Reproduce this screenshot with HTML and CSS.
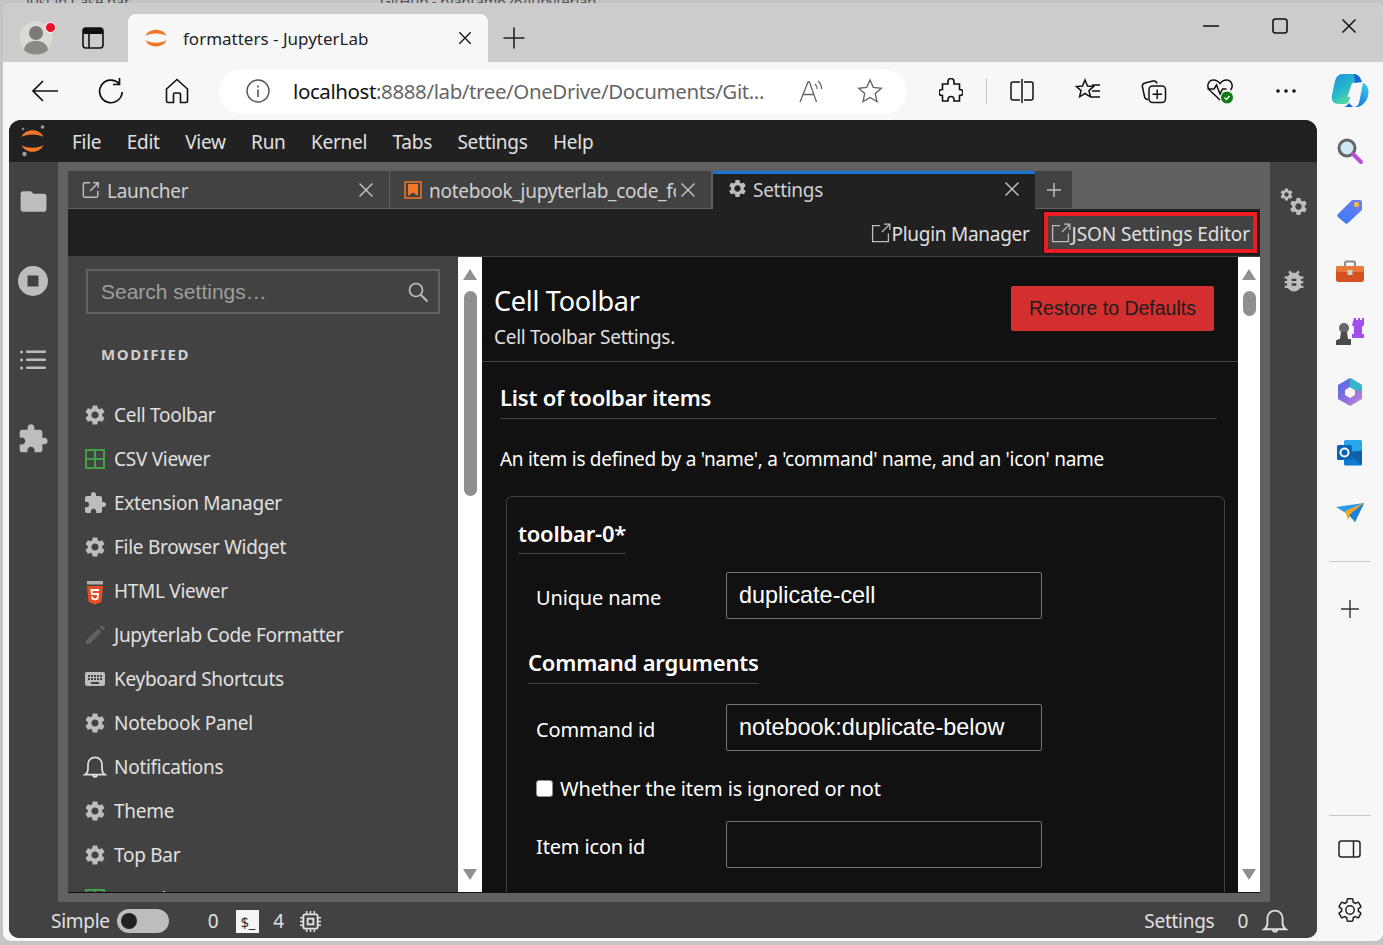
FILE: index.html
```html
<!DOCTYPE html>
<html lang="en">

<head>
    <meta charset="UTF-8">
    <title>formatters - JupyterLab</title>
    <link rel="stylesheet" href="styles.css">
</head>

<body>

    <svg class="sprite" width="0" height="0">
        <symbol id="i-gear" viewBox="0 0 24 24"><path d="M19.14 12.94c.04-.3.06-.61.06-.94 0-.32-.02-.64-.07-.94l2.03-1.58c.18-.14.23-.41.12-.61l-1.92-3.32c-.12-.22-.37-.29-.59-.22l-2.39.96c-.5-.38-1.03-.7-1.62-.94l-.36-2.54c-.04-.24-.24-.41-.48-.41h-3.84c-.24 0-.43.17-.47.41l-.36 2.54c-.59.24-1.13.57-1.62.94l-2.39-.96c-.22-.08-.47 0-.59.22L2.74 8.87c-.12.21-.08.47.12.61l2.03 1.58c-.05.3-.09.63-.09.94s.02.64.07.94l-2.03 1.58c-.18.14-.23.41-.12.61l1.92 3.32c.12.22.37.29.59.22l2.39-.96c.5.38 1.03.7 1.62.94l.36 2.54c.05.24.24.41.48.41h3.84c.24 0 .44-.17.47-.41l.36-2.54c.59-.24 1.13-.56 1.62-.94l2.39.96c.22.08.47 0 .59-.22l1.92-3.32c.12-.22.07-.47-.12-.61l-2.01-1.58zM12 15.6c-1.98 0-3.6-1.62-3.6-3.6s1.62-3.6 3.6-3.6 3.6 1.62 3.6 3.6-1.62 3.6-3.6 3.6z"/></symbol>
        <symbol id="i-puzzle" viewBox="0 0 24 24"><path d="M20.5 11H19V7c0-1.1-.9-2-2-2h-4V3.5C13 2.12 11.88 1 10.5 1S8 2.12 8 3.5V5H4c-1.1 0-1.99.9-1.99 2v3.8H3.5c1.49 0 2.7 1.21 2.7 2.7s-1.21 2.7-2.7 2.7H2V20c0 1.1.9 2 2 2h3.8v-1.5c0-1.49 1.21-2.7 2.7-2.7 1.49 0 2.7 1.21 2.7 2.7V22H17c1.1 0 2-.9 2-2v-4h1.5c1.38 0 2.5-1.12 2.5-2.5S21.88 11 20.5 11z"/></symbol>
        <symbol id="i-bell" viewBox="0 0 24 24"><path fill="none" stroke="currentColor" stroke-width="1.700" d="M2 19.600c1.600-1 3-2.600 3-5.600V9.500C5 5.400 8 2.400 12 2.400s7 3 7 7.100V14c0 3 1.400 4.600 3 5.600zM10 19.800a2 2 0 0 0 4 0"/></symbol>
        <symbol id="i-ext" viewBox="0 0 20 20"><path fill="none" stroke="#bdbdbd" stroke-width="1.300" d="M9 2.600H1.600v16h15.800v-8M11 9l7.600-7.600M13 1.200h5.800V7"/></symbol>
        <symbol id="i-x" viewBox="0 0 16 16"><path fill="none" stroke="currentColor" stroke-width="1.500" d="M1.500 1.500l13 13M14.500 1.500l-13 13"/></symbol>
    </svg>

    <div class="behind">
        <span class="behind-a">Just in Case.bar</span>
        <span class="behind-b">GitHub - ryantam626/jupyterlab</span>
    </div>

    <div class="window">

        <div class="tabstrip">
            <div class="avatar">
                <svg width="36" height="36" viewBox="0 0 36 36">
                    <circle cx="17" cy="18" r="16.500" fill="#dcdad6"/>
                    <circle cx="17" cy="13" r="7" fill="#7c7a77"/>
                    <path d="M5 30c1-7 6-9 12-9s11 2 12 9c-3 3-7 4.500-12 4.500S8 33 5 30z" fill="#8b8985"/>
                </svg>
                <span class="avatar-dot"></span>
            </div>
            <svg class="tabs-btn" width="22" height="22" viewBox="0 0 22 22">
                <rect x="1" y="1" width="20" height="20" rx="3" fill="none" stroke="#111" stroke-width="1.600"/>
                <path d="M1 4a3 3 0 0 1 3-3h14a3 3 0 0 1 3 3v3H1z" fill="#111"/>
                <path d="M7 7v14" stroke="#111" stroke-width="1.600"/>
            </svg>
            <div class="browser-tab">
                <svg width="24" height="24" viewBox="0 0 24 24">
                    <path d="M1.500 10C4 1.500 20 1.500 22.500 10 18 6.500 6 6.500 1.500 10zM1.500 14C4 22.500 20 22.500 22.500 14 18 17.500 6 17.500 1.500 14z" fill="#f37726"/>
                </svg>
                <span class="browser-tab-title">formatters - JupyterLab</span>
                <svg class="browser-tab-close" width="14" height="14"><use href="#i-x"/></svg>
            </div>
            <svg class="new-tab" width="24" height="24" viewBox="0 0 24 24"><path d="M12 1.500v21M1.500 12h21" stroke="#222" stroke-width="1.600"/></svg>
            <div class="win-controls">
                <svg width="16" height="16" viewBox="0 0 16 16"><path d="M0 8h16" stroke="#111" stroke-width="1.600"/></svg>
                <svg width="16" height="16" viewBox="0 0 16 16"><rect x="1" y="1" width="14" height="14" rx="2.500" fill="none" stroke="#111" stroke-width="1.600"/></svg>
                <svg width="16" height="16"><use href="#i-x"/></svg>
            </div>
        </div>

        <div class="toolbar">
            <div class="tool">
                <svg width="28" height="24" viewBox="0 0 28 24"><path d="M27 12H2M12 2L2 12l10 10" fill="none" stroke="#111" stroke-width="1.700"/></svg>
            </div>
            <div class="tool">
                <svg width="26" height="28" viewBox="0 0 26 28"><path d="M21 6.500A11.300 11.300 0 1 0 24.200 15M21.500 1v6.500H15" fill="none" stroke="#111" stroke-width="1.700"/></svg>
            </div>
            <div class="tool">
                <svg width="24" height="26" viewBox="0 0 24 26"><path d="M1.500 11L12 1.500 22.500 11v12a1.500 1.500 0 0 1-1.500 1.500h-5.500v-8a1.500 1.500 0 0 0-1.500-1.500h-4a1.500 1.500 0 0 0-1.500 1.500v8H3A1.500 1.500 0 0 1 1.500 23z" fill="none" stroke="#111" stroke-width="1.600"/></svg>
            </div>
            <div class="address">
                <svg width="24" height="24" viewBox="0 0 24 24"><circle cx="12" cy="12" r="11" fill="none" stroke="#555" stroke-width="1.400"/><path d="M12 10.500V18M12 6.500v2" stroke="#555" stroke-width="1.600"/></svg>
                <span class="url"><b>localhost</b>:8888/lab/tree/OneDrive/Documents/Git...</span>
                <svg class="read-aloud" width="24" height="24" viewBox="0 0 24 24"><path d="M1 23L9 3h1.500l7 20M4.500 15.500h10M16 5a6 6 0 0 1 2 5M19 2a10 10 0 0 1 3.500 8" fill="none" stroke="#666" stroke-width="1.300"/></svg>
                <svg class="star" width="26" height="26" viewBox="0 0 26 26"><path d="M13 2l3.300 7.400 8 .8-6 5.400 1.700 8L13 19.500 6 23.600l1.700-8-6-5.400 8-.8z" fill="none" stroke="#666" stroke-width="1.400"/></svg>
            </div>
            <div class="tool tool-first">
                <svg width="24" height="26" viewBox="0 0 24 26"><path d="M9 3.500a3 3 0 0 1 6 0V6h5.500v5.500H21a3 3 0 0 1 0 6h-.5v5.500H15v-1.500a3 3 0 0 0-6 0V23H3.500v-5.500H3a3 3 0 0 1 0-6h.5V6H9z" fill="none" stroke="#111" stroke-width="1.600"/></svg>
            </div>
            <span class="tool-sep"></span>
            <div class="tool">
                <svg width="24" height="24" viewBox="0 0 24 24"><path d="M10 3H3a2 2 0 0 0-2 2v14a2 2 0 0 0 2 2h7M14 3h7a2 2 0 0 1 2 2v14a2 2 0 0 1-2 2h-7M12 0v24" fill="none" stroke="#111" stroke-width="1.500"/></svg>
            </div>
            <div class="tool">
                <svg width="26" height="26" viewBox="0 0 26 26"><path d="M10 2l2.500 6 6 .6-4.500 4 1.400 6.200L10 15.500l-5.400 3.300L6 12.600l-4.500-4 6-.6zM17 7h8M17 13h8M15 19h10" fill="none" stroke="#111" stroke-width="1.500"/></svg>
            </div>
            <div class="tool">
                <svg width="26" height="26" viewBox="0 0 26 26"><path d="M7 21.500c-2 0-3-1-3.400-2.500L1.500 9C1 7 2 5.500 4 5l8-2c2-.4 3.500.4 4 2.500" fill="none" stroke="#111" stroke-width="1.500"/><rect x="8" y="8" width="16.500" height="16.500" rx="3.500" fill="#f7f7f7" stroke="#111" stroke-width="1.500"/><path d="M16.200 11.500v9.500M11.500 16.200H21" stroke="#111" stroke-width="1.500"/></svg>
            </div>
            <div class="tool">
                <svg width="28" height="26" viewBox="0 0 28 26"><path d="M14 22L3.500 12C0 8 2.500 2 7.500 2c3 0 5 1.500 6.500 3.500C15.500 3.500 17.500 2 20.500 2c5 0 7.500 6 4 10" fill="none" stroke="#111" stroke-width="1.500"/><path d="M1.500 11H8l2.500-4 3.500 9 2.500-5h4" fill="none" stroke="#111" stroke-width="1.500"/><circle cx="21" cy="19.500" r="6" fill="#107c10"/><path d="M18.500 19.500l2 2 3-3.500" fill="none" stroke="#fff" stroke-width="1.400"/></svg>
            </div>
            <div class="tool">
                <svg width="22" height="6" viewBox="0 0 22 6"><circle cx="3" cy="3" r="1.800" fill="#111"/><circle cx="11" cy="3" r="1.800" fill="#111"/><circle cx="19" cy="3" r="1.800" fill="#111"/></svg>
            </div>
            <div class="tool tool-last">
                <svg width="38" height="36" viewBox="0 0 38 36">
                    <defs>
                        <linearGradient id="cpA" x1="0" y1="0" x2="0.600" y2="1"><stop offset="0" stop-color="#1b8fe0"/><stop offset=".6" stop-color="#28b9c8"/><stop offset="1" stop-color="#5fdc9a"/></linearGradient>
                        <linearGradient id="cpB" x1="0.800" y1="0" x2="0.200" y2="1"><stop offset="0" stop-color="#38c9f0"/><stop offset="1" stop-color="#1466d8"/></linearGradient>
                    </defs>
                    <path d="M11 1h11c3 0 4 2 3 5l-7 22c-.8 2-2 3-4 3H8c-6 0-8-4-7-9l3-14C5 4 8 1 11 1z" fill="url(#cpA)"/>
                    <path d="M22 34c3 0 5-1.500 6-4l4-20c2 .5 5.500 3 5.500 9 0 8-6 15-12 15H12c2 0 4-1 5-3l1-1z" fill="url(#cpB)"/>
                    <path d="M23 1c3 0 6 2 8 8l-7 1z" fill="#1666d6"/>
                    <path d="M21 10h3.500l-4.500 14h-3.500z" fill="#f7f7f7"/>
                </svg>
            </div>
        </div>

        <div class="content">
            <div class="lab">

                <div class="menubar">
                    <svg class="jp-logo" width="28" height="34" viewBox="0 0 28 34">
                        <path d="M2.500 13C6 4 21 4 24.500 13 20 9.500 7 9.500 2.500 13zM2.500 21C6 30 21 30 24.500 21 20 24.500 7 24.500 2.500 21z" fill="#f37726"/>
                        <circle cx="23.500" cy="3" r="1.800" fill="#9e9e9e"/><circle cx="4" cy="5" r="1.300" fill="#8a8a8a"/><circle cx="5.500" cy="30" r="2.200" fill="#9e9e9e"/>
                    </svg>
                    <span>File</span><span>Edit</span><span>View</span><span>Run</span><span>Kernel</span><span>Tabs</span><span>Settings</span><span>Help</span>
                </div>

                <div class="lab-body">
                    <div class="side-left">
                        <div class="side-btn">
                            <svg width="31" height="31" viewBox="0 0 24 24"><path d="M10 4H4c-1.100 0-1.990.9-1.990 2L2 18c0 1.100.9 2 2 2h16c1.100 0 2-.9 2-2V8c0-1.100-.9-2-2-2h-8l-2-2z"/></svg>
                        </div>
                        <div class="side-btn">
                            <svg width="30" height="30" viewBox="0 0 30 30"><path fill-rule="evenodd" d="M15 0a15 15 0 1 0 0 30 15 15 0 0 0 0-30zM9.500 9.500h11v11h-11z"/></svg>
                        </div>
                        <div class="side-btn">
                            <svg width="26" height="20" viewBox="0 0 26 20"><rect x="0" y="0.500" width="3" height="3" rx="1.500"/><rect x="6" y="0.500" width="20" height="2.500" rx="1"/><rect x="0" y="8.500" width="3" height="3" rx="1.500"/><rect x="6" y="8.500" width="20" height="2.500" rx="1"/><rect x="0" y="16.500" width="3" height="3" rx="1.500"/><rect x="6" y="16.500" width="20" height="2.500" rx="1"/></svg>
                        </div>
                        <div class="side-btn">
                            <svg width="32" height="32"><use href="#i-puzzle"/></svg>
                        </div>
                    </div>

                    <div class="dock">
                        <div class="dock-tabs">
                            <div class="dock-tab">
                                <svg class="tab-ico" width="18" height="18" viewBox="0 0 20 20"><path fill="none" stroke="#bdbdbd" stroke-width="1.600" d="M9 2H3a1.500 1.500 0 0 0-1.500 1.500v13A1.500 1.500 0 0 0 3 18h13a1.500 1.500 0 0 0 1.500-1.500V11M9 11l9-9M12.500 2H18v5.500"/></svg>
                                <span class="dock-tab-label">Launcher</span>
                                <svg class="dock-close" width="16" height="16"><use href="#i-x"/></svg>
                            </div>
                            <div class="dock-tab">
                                <svg class="tab-ico" width="18" height="18" viewBox="0 0 18 18"><rect x="1" y="1" width="16" height="16" fill="none" stroke="#f37726" stroke-width="1.500"/><path d="M4 3h10v12l-5-3.500L4 15z" fill="#f37726"/></svg>
                                <span class="dock-tab-label">notebook_jupyterlab_code_formatter</span>
                                <svg class="dock-close" width="16" height="16"><use href="#i-x"/></svg>
                            </div>
                            <div class="dock-tab dock-tab-active">
                                <svg class="tab-ico gear" width="21" height="21"><use href="#i-gear"/></svg>
                                <span class="dock-tab-label">Settings</span>
                                <svg class="dock-close" width="16" height="16"><use href="#i-x"/></svg>
                            </div>
                            <div class="dock-add">
                                <svg width="14" height="14" viewBox="0 0 14 14"><path d="M7 0v14M0 7h14" stroke="#bdbdbd" stroke-width="1.500"/></svg>
                            </div>
                        </div>

                        <div class="settings-toolbar">
                            <div class="link-btn">
                                <svg width="20" height="20"><use href="#i-ext"/></svg>
                                <span>Plugin Manager</span>
                            </div>
                            <div class="json-mark">
                                <div class="link-btn json-btn">
                                    <svg width="20" height="20"><use href="#i-ext"/></svg>
                                    <span>JSON Settings Editor</span>
                                </div>
                            </div>
                        </div>

                        <div class="settings-body">
                            <div class="plugin-list">
                                <div class="search">
                                    <span>Search settings…</span>
                                    <svg width="22" height="22" viewBox="0 0 22 22"><circle cx="9" cy="9" r="6.500" fill="none" stroke="#bdbdbd" stroke-width="1.700"/><path d="M14 14l6.500 6.500" stroke="#bdbdbd" stroke-width="2"/></svg>
                                </div>
                                <h3 class="list-title">MODIFIED</h3>
                                <ul class="plugins">
                                    <li><svg class="gear" width="24" height="24"><use href="#i-gear"/></svg>Cell Toolbar</li>
                                    <li><svg width="20" height="20" viewBox="0 0 20 20"><path fill="none" stroke="#43a047" stroke-width="2" d="M1 1h18v18H1zM10 1v18M1 10h18"/></svg>CSV Viewer</li>
                                    <li><svg class="gear" width="24" height="24"><use href="#i-puzzle"/></svg>Extension Manager</li>
                                    <li><svg class="gear" width="24" height="24"><use href="#i-gear"/></svg>File Browser Widget</li>
                                    <li><svg width="20" height="24" viewBox="0 0 20 24"><path d="M2 5h16l-1.500 16L10 23.500 3.500 21z" fill="#e44d26"/><path d="M2 0h16v3.500H2z" fill="#e0e0e0" opacity=".7"/><path d="M14 9H6.500l.3 4H13l-.4 4.500-2.600 1-2.600-1-.2-2" fill="none" stroke="#fff" stroke-width="1.800"/></svg>HTML Viewer</li>
                                    <li><svg width="24" height="24" viewBox="0 0 24 24"><path d="M3 21v-3.500L15 5.500 18.500 9 6.500 21zM16.500 4l2-2L22 5.500l-2 2z" fill="#616161"/></svg>Jupyterlab Code Formatter</li>
                                    <li><svg class="gear" width="24" height="24" viewBox="0 0 24 24"><path d="M20 5H4c-1.100 0-1.990.9-1.990 2L2 17c0 1.100.9 2 2 2h16c1.100 0 2-.9 2-2V7c0-1.100-.9-2-2-2zm-9 3h2v2h-2V8zm0 3h2v2h-2v-2zM8 8h2v2H8V8zm0 3h2v2H8v-2zm-1 2H5v-2h2v2zm0-3H5V8h2v2zm9 7H8v-2h8v2zm0-4h-2v-2h2v2zm0-3h-2V8h2v2zm3 3h-2v-2h2v2zm0-3h-2V8h2v2z"/></svg>Keyboard Shortcuts</li>
                                    <li><svg class="gear" width="24" height="24"><use href="#i-gear"/></svg>Notebook Panel</li>
                                    <li><svg class="bell" width="24" height="24"><use href="#i-bell"/></svg>Notifications</li>
                                    <li><svg class="gear" width="24" height="24"><use href="#i-gear"/></svg>Theme</li>
                                    <li><svg class="gear" width="24" height="24"><use href="#i-gear"/></svg>Top Bar</li>
                                    <li><svg width="20" height="20" viewBox="0 0 20 20"><path fill="none" stroke="#43a047" stroke-width="2" d="M1 1h18v18H1zM10 1v18M1 10h18"/></svg>TSV Viewer</li>
                                </ul>
                            </div>

                            <div class="scrollbar">
                                <span class="arrow-up"></span>
                                <span class="thumb thumb-list"></span>
                                <span class="arrow-down"></span>
                            </div>

                            <div class="editor">
                                <div class="editor-head">
                                    <div>
                                        <h2>Cell Toolbar</h2>
                                        <p>Cell Toolbar Settings.</p>
                                    </div>
                                    <button class="restore">Restore to Defaults</button>
                                </div>
                                <div class="editor-form">
                                    <h3 class="legend">List of toolbar items</h3>
                                    <p class="desc">An item is defined by a 'name', a 'command' name, and an 'icon' name</p>
                                    <div class="item-card">
                                        <h3 class="card-legend"><span>toolbar-0*</span></h3>
                                        <div class="field">
                                            <label>Unique name</label>
                                            <input type="text" value="duplicate-cell">
                                        </div>
                                        <h3 class="args-legend"><span>Command arguments</span></h3>
                                        <div class="field">
                                            <label>Command id</label>
                                            <input type="text" value="notebook:duplicate-below">
                                        </div>
                                        <label class="check"><input type="checkbox">Whether the item is ignored or not</label>
                                        <div class="field">
                                            <label>Item icon id</label>
                                            <input type="text">
                                        </div>
                                    </div>
                                </div>
                            </div>

                            <div class="scrollbar scrollbar-thin">
                                <span class="arrow-up"></span>
                                <span class="thumb thumb-form"></span>
                                <span class="arrow-down"></span>
                            </div>
                        </div>
                    </div>

                    <div class="side-right">
                        <div class="side-btn">
                            <svg width="30" height="30" viewBox="0 0 30 30"><use href="#i-gear" x="0" y="0" width="15" height="15"/><use href="#i-gear" x="9" y="9" width="21" height="21"/></svg>
                        </div>
                        <div class="side-btn">
                            <svg width="28" height="28" viewBox="0 0 24 24"><path d="M20 8h-2.810c-.45-.78-1.070-1.450-1.820-1.960L17 4.410 15.590 3l-2.170 2.170C12.960 5.060 12.490 5 12 5c-.49 0-.96.06-1.410.17L8.410 3 7 4.410l1.620 1.630C7.880 6.550 7.260 7.220 6.810 8H4v2h2.090c-.05.33-.09.66-.09 1v1H4v2h2v1c0 .34.04.67.09 1H4v2h2.810c1.040 1.790 2.970 3 5.190 3s4.150-1.210 5.190-3H20v-2h-2.090c.05-.33.09-.66.09-1v-1h2v-2h-2v-1c0-.34-.04-.67-.09-1H20V8zm-6 8h-4v-2h4v2zm0-4h-4v-2h4v2z"/></svg>
                        </div>
                    </div>
                </div>

                <div class="statusbar">
                    <span class="status-simple">Simple</span>
                    <span class="toggle"><span class="toggle-dot"></span></span>
                    <span class="status-zero">0</span>
                    <span class="term-ico">$_</span>
                    <span class="status-four">4</span>
                    <svg class="cpu" width="21" height="21" viewBox="0 0 22 22"><rect x="3.500" y="3.500" width="15" height="15" rx="2" fill="none" stroke="#e0e0e0" stroke-width="2"/><rect x="8" y="8" width="6" height="6" fill="none" stroke="#e0e0e0" stroke-width="2"/><path d="M7 0v3M11 0v3M15 0v3M7 19v3M11 19v3M15 19v3M0 7h3M0 11h3M0 15h3M19 7h3M19 11h3M19 15h3" stroke="#e0e0e0" stroke-width="1.600"/></svg>
                    <span class="status-right">Settings</span>
                    <span class="status-count">0</span>
                    <svg class="status-bell" width="26" height="26"><use href="#i-bell"/></svg>
                </div>
            </div>

            <div class="edge-bar">
                <div class="edge-ico">
                    <svg width="28" height="28" viewBox="0 0 28 28"><circle cx="11" cy="11" r="8" fill="#cfe8f7" stroke="#666" stroke-width="3"/><path d="M17 17l8 8" stroke="#b84fd8" stroke-width="4" stroke-linecap="round"/></svg>
                </div>
                <div class="edge-ico">
                    <svg width="28" height="28" viewBox="0 0 28 28"><defs><linearGradient id="tagG" x1="0" y1="1" x2="1" y2="0"><stop offset="0" stop-color="#2f7bf5"/><stop offset="1" stop-color="#7a7cf0"/></linearGradient></defs><path d="M2 17L16 3h8a2 2 0 0 1 2 2v8L12 26a2 2 0 0 1-3 0l-7-6a2 2 0 0 1 0-3z" fill="url(#tagG)"/><circle cx="20.500" cy="7.500" r="2.500" fill="#f5c33b"/></svg>
                </div>
                <div class="edge-ico">
                    <svg width="28" height="24" viewBox="0 0 28 24"><path d="M9 6V3a1.500 1.500 0 0 1 1.500-1.500h7A1.500 1.500 0 0 1 19 3v3" fill="none" stroke="#8a8a8a" stroke-width="2"/><rect y="6" width="28" height="16" rx="2.500" fill="#d4521f"/><rect y="6" width="28" height="6" rx="2" fill="#e8793a"/><rect x="11.500" y="10" width="5" height="5" fill="#d0d0d0"/></svg>
                </div>
                <div class="edge-ico">
                    <svg width="30" height="30" viewBox="0 0 30 30"><path d="M19 1h2v2h2V1h2v2h2V1h2v7l-2 2v7h2v4H17v-4h2v-7l-2-2z" fill="#a64df0"/><circle cx="9" cy="11" r="5" fill="#666"/><path d="M6 15h6l1 7h3v6H1v-4c0-1 2-2 4-2z" fill="#4a4a4a"/></svg>
                </div>
                <div class="edge-ico">
                    <svg width="26" height="28" viewBox="0 0 26 28"><defs><linearGradient id="msG" x1="0" y1="0" x2="1" y2="1"><stop offset="0" stop-color="#3f6ee8"/><stop offset=".5" stop-color="#8a6ddc"/><stop offset="1" stop-color="#c788d8"/></linearGradient></defs><path fill-rule="evenodd" d="M13 0l12 7v14l-12 7L1 21V7zM13 9l-5 3v5l5 3 5-3v-5z" fill="url(#msG)"/><path d="M13 0l12 7v6l-7-1-5-3z" fill="#34b8c8"/></svg>
                </div>
                <div class="edge-ico">
                    <svg width="26" height="26" viewBox="0 0 26 26"><rect x="7" y="0" width="18" height="14" rx="1.500" fill="#28a8ea"/><path d="M7 11l18 0v13a1.500 1.500 0 0 1-1.500 1.500h-15A1.500 1.500 0 0 1 7 24z" fill="#0f78d4"/><path d="M11 14l14-4v15z" fill="#14447d" opacity=".5"/><rect x="0" y="5" width="15" height="15" rx="1.500" fill="#0a64b8"/><circle cx="7.500" cy="12.500" r="4" fill="none" stroke="#fff" stroke-width="2"/></svg>
                </div>
                <div class="edge-ico">
                    <svg width="28" height="20" viewBox="0 0 28 20"><path d="M0 4L28 0 19 19 13 12z" fill="#2f9be8"/><path d="M28 0L9 8l3 9 3-6z" fill="#f5a623"/><path d="M28 0L13 12l6 7z" fill="#1e7fd6"/></svg>
                </div>
                <div class="edge-rule edge-rule-top"></div>
                <div class="edge-plus">
                    <svg width="18" height="18" viewBox="0 0 18 18"><path d="M9 0v18M0 9h18" stroke="#333" stroke-width="1.400"/></svg>
                </div>
                <div class="edge-rule edge-rule-bottom"></div>
                <div class="edge-panel">
                    <svg width="24" height="20" viewBox="0 0 24 20"><rect x="1" y="2" width="21" height="16" rx="2.500" fill="none" stroke="#222" stroke-width="1.500"/><path d="M15.500 2v16" stroke="#222" stroke-width="1.500"/></svg>
                </div>
                <div class="edge-gear">
                    <svg width="28" height="28" viewBox="0 0 24 24"><path fill="none" stroke="#222" stroke-width="1.300" d="M19.140 12.940c.04-.3.06-.61.06-.94 0-.32-.02-.64-.07-.94l2.030-1.580c.18-.14.23-.41.12-.61l-1.920-3.320c-.12-.22-.37-.29-.59-.22l-2.390.96c-.5-.38-1.030-.7-1.620-.94l-.36-2.540c-.04-.24-.24-.41-.48-.41h-3.840c-.24 0-.43.17-.47.41l-.36 2.540c-.59.24-1.130.57-1.620.94l-2.390-.96c-.22-.08-.47 0-.59.22L2.740 8.870c-.12.21-.08.47.12.61l2.030 1.580c-.05.3-.09.63-.09.94s.02.64.07.94l-2.030 1.580c-.18.14-.23.41-.12.61l1.920 3.320c.12.22.37.29.59.22l2.390-.96c.5.38 1.030.7 1.620.94l.36 2.540c.05.24.24.41.48.41h3.840c.24 0 .44-.17.47-.41l.36-2.540c.59-.24 1.130-.56 1.620-.94l2.390.96c.22.08.47 0 .59-.22l1.920-3.320c.12-.22.07-.47-.12-.61l-2.010-1.580zM12 15.600c-1.980 0-3.600-1.620-3.600-3.600s1.620-3.600 3.600-3.600 3.600 1.620 3.600 3.600-1.620 3.600-3.600 3.600z"/></svg>
                </div>
            </div>
        </div>
    </div>

</body>

</html>
```

FILE: styles.css
```css
* {
    margin: 0;
    padding: 0;
    box-sizing: border-box;
}

body {
    width: 1383px;
    height: 945px;
    overflow: hidden;
    background-color: #c4c4c4;
    font-family: "Noto Sans", "Open Sans", sans-serif;
    font-size: 19px;
    letter-spacing: -0.28px;
    color: #e0e0e0;
    position: relative;
}

.sprite {
    position: absolute;
}

.behind {
    height: 3px;
    overflow: hidden;
    display: flex;
    color: #555;
    font-size: 15px;
    line-height: 3px;
}

.behind span {
    display: block;
}

.behind-a {
    margin-left: 26px;
    width: 354px;
}

.window {
    height: 938px;
    margin-left: 3px;
    background-color: #f7f7f7;
    border-radius: 8px;
    overflow: hidden;
    display: flex;
    flex-direction: column;
}

/* browser chrome */
.tabstrip {
    height: 59px;
    background-color: #cccccc;
    display: flex;
    align-items: flex-end;
    position: relative;
    flex-shrink: 0;
}

.avatar {
    position: absolute;
    left: 16px;
    top: 17px;
    height: 36px;
}

.avatar-dot {
    position: absolute;
    right: -1px;
    top: 2px;
    width: 11px;
    height: 11px;
    border-radius: 50%;
    background-color: #e81123;
    border: 1px solid #fff;
}

.tabs-btn {
    position: absolute;
    left: 79px;
    top: 24px;
}

.browser-tab {
    margin-left: 125px;
    width: 360px;
    height: 48px;
    background-color: #f7f7f7;
    border-radius: 8px 8px 0 0;
    display: flex;
    align-items: center;
    padding: 0 16px;
    color: #222;
    font-size: 17px;
    letter-spacing: 0;
}

.browser-tab-title {
    margin-left: 15px;
    flex: 1;
}

.browser-tab-close {
    color: #111;
}

.new-tab {
    margin-left: 14px;
    margin-bottom: 12px;
}

.win-controls {
    margin-left: auto;
    display: flex;
    gap: 53px;
    padding-right: 26px;
    margin-bottom: 28px;
    color: #111;
}

.toolbar {
    height: 58px;
    display: flex;
    align-items: center;
    padding-left: 9px;
    flex-shrink: 0;
}

.tool {
    width: 66px;
    height: 46px;
    display: flex;
    align-items: center;
    justify-content: center;
    flex-shrink: 0;
}

.tool-first {
    margin-left: 11px;
}

.tool-last {
    width: 62px;
}

.tool-sep {
    width: 1px;
    height: 26px;
    margin: 0 2px;
    flex-shrink: 0;
    background-color: #c8c8c8;
}

.address {
    width: 688px;
    height: 45px;
    margin-left: 9px;
    flex-shrink: 0;
    background-color: #ffffff;
    border-radius: 23px;
    display: flex;
    align-items: center;
    padding-left: 27px;
}

.url {
    margin-left: 23px;
    width: 484px;
    font-size: 20.5px;
    color: #666666;
    white-space: nowrap;
    overflow: hidden;
    letter-spacing: -0.4px;
}

.url b {
    font-weight: 400;
    color: #111;
}

.read-aloud {
    margin-left: 22px;
}

.star {
    margin-left: 34px;
}

.content {
    flex: 1;
    display: flex;
    min-height: 0;
    padding-left: 6px;
}

/* jupyterlab */
.lab {
    width: 1308px;
    height: 818px;
    background-color: #424242;
    border-radius: 12px 12px 10px 10px;
    overflow: hidden;
    display: flex;
    flex-direction: column;
}

.menubar {
    height: 42px;
    background-color: #212121;
    display: flex;
    align-items: center;
    padding: 2px 0 0 10px;
    flex-shrink: 0;
    font-size: 19px;
}

.jp-logo {
    margin: -2px 25px 0 0;
}

.menubar span {
    margin-right: 25.5px;
}

.lab-body {
    height: 740px;
    display: flex;
    flex-shrink: 0;
}

.side-left {
    width: 49px;
    flex-shrink: 0;
    background-color: #424242;
    padding-right: 1px;
}

.side-right {
    width: 47px;
    flex-shrink: 0;
    background-color: #424242;
}

.side-btn {
    height: 79px;
    display: flex;
    align-items: center;
    justify-content: center;
    fill: #bdbdbd;
}

.dock {
    width: 1212px;
    padding: 9px 10px;
    background-color: #616161;
    display: flex;
    flex-direction: column;
}

.dock-tabs {
    height: 38px;
    display: flex;
    flex-shrink: 0;
    border-bottom: 1px solid #616161;
}

.dock-tab {
    width: 322px;
    background-color: #424242;
    border-right: 1px solid #616161;
    display: flex;
    align-items: center;
    padding: 2px 15px 0 14px;
    color: #d0d0d0;
}

.dock-tab-label {
    flex: 1;
    margin-left: 7px;
    font-size: 19px;
    white-space: nowrap;
    overflow: hidden;
}

.dock-tab .dock-close {
    color: #bdbdbd;
    flex-shrink: 0;
    margin: -2px 0 0 4px;
}

.dock-tab-active {
    background-color: #212121;
    border-top: 3px solid #1976d2;
    border-right: 0;
    margin: 0 0 -1px 1px;
    padding-bottom: 4px;
    padding-top: 0;
}

.dock-tab-active .dock-tab-label {
    margin-left: 5px;
}

.tab-ico {
    flex-shrink: 0;
    margin-top: -2px;
}

.gear {
    fill: #bdbdbd;
}

.dock-add {
    width: 37px;
    background-color: #424242;
    display: flex;
    align-items: center;
    justify-content: center;
}

.settings-toolbar {
    height: 48px;
    background-color: #212121;
    border-bottom: 1px solid #424242;
    display: flex;
    align-items: center;
    justify-content: flex-end;
    padding-right: 3px;
    flex-shrink: 0;
}

.link-btn {
    display: flex;
    align-items: center;
    color: #e0e0e0;
    white-space: nowrap;
    font-size: 19px;
    line-height: 28px;
}

.link-btn span {
    padding-top: 2px;
}

.link-btn svg {
    margin-right: 1px;
}

.json-mark {
    margin-left: 14px;
    border: 4px solid #ed1c24;
    box-shadow: 0 0 0 1px #111;
    height: 41px;
}

.json-btn {
    height: 33px;
    padding: 0 3px;
    background-color: #424242;
    border-radius: 2px;
    letter-spacing: -0.1px;
}

.settings-body {
    flex: 1;
    min-height: 0;
    display: flex;
    overflow: hidden;
    border-bottom: 1px solid #111;
}

.plugin-list {
    width: 390px;
    flex-shrink: 0;
    background-color: #424242;
    overflow: hidden;
    padding-top: 12px;
}

.search {
    width: 354px;
    height: 45px;
    margin-left: 18px;
    border: 2px solid #616161;
    display: flex;
    align-items: center;
    justify-content: space-between;
    padding: 0 9px 0 13px;
    font-family: "Liberation Sans", Arial, sans-serif;
    font-size: 21px;
    letter-spacing: 0;
    color: #9e9e9e;
}

.list-title {
    margin: 31px 0 0 33px;
    height: 18px;
    line-height: 18px;
    font-size: 15px;
    font-weight: 700;
    letter-spacing: 1.6px;
    color: #d0d0d0;
}

.plugins {
    list-style: none;
    margin-top: 30px;
}

.plugins li {
    height: 44px;
    display: flex;
    align-items: center;
    padding-left: 46px;
    position: relative;
    white-space: nowrap;
    font-size: 19px;
    color: #e0e0e0;
}

.plugins li svg {
    position: absolute;
    left: 15px;
    top: 10px;
}

.plugins li svg[width="20"] {
    left: 17px;
    top: 12px;
}

.bell {
    color: #e0e0e0;
}

.scrollbar {
    width: 24px;
    flex-shrink: 0;
    background-color: #ffffff;
    display: flex;
    flex-direction: column;
    align-items: center;
    padding: 12px 0;
}

.scrollbar-thin {
    width: 22px;
}

.arrow-up,
.arrow-down {
    width: 0;
    height: 0;
    border-left: 7px solid transparent;
    border-right: 7px solid transparent;
}

.arrow-up {
    border-bottom: 11px solid #8f8f8f;
}

.arrow-down {
    border-top: 11px solid #8f8f8f;
    margin-top: auto;
}

.thumb {
    width: 13px;
    border-radius: 7px;
    background-color: #8f8f8f;
    margin-top: 11px;
}

.thumb-list {
    height: 205px;
}

.thumb-form {
    height: 25px;
}

.editor {
    width: 756px;
    flex-shrink: 0;
    background-color: #111111;
    overflow: hidden;
    color: #ffffff;
}

.editor-head {
    height: 105px;
    border-bottom: 1px solid #424242;
    display: flex;
    justify-content: space-between;
    padding: 25px 24px 0 12px;
}

.editor-head h2 {
    font-size: 27px;
    font-weight: 400;
    line-height: 38px;
}

.editor-head p {
    font-size: 19px;
    line-height: 26px;
    margin-top: 4px;
    color: #e0e0e0;
}

.restore {
    width: 203px;
    height: 45px;
    margin-top: 4px;
    background-color: #d32f2f;
    border: none;
    border-radius: 2px;
    font-family: "Liberation Sans", Arial, sans-serif;
    font-size: 19.5px;
    color: #1c1c1c;
}

.editor-form {
    padding: 21px 0 0 18px;
}

.legend {
    width: 717px;
    height: 36px;
    border-bottom: 1px solid #424242;
    font-size: 22px;
    font-weight: 600;
    line-height: 28px;
    letter-spacing: -0.2px;
}

.desc {
    margin-top: 27px;
    font-size: 19px;
    line-height: 26px;
}

.item-card {
    width: 719px;
    height: 420px;
    margin: 24px 0 0 6px;
    border: 1px solid #424242;
    border-radius: 6px;
    padding: 21px 0 0 11px;
}

.card-legend {
    font-size: 22px;
    font-weight: 600;
    line-height: 30px;
    letter-spacing: -0.2px;
}

.card-legend span,
.args-legend span {
    display: inline-block;
    height: 36px;
    border-bottom: 1px solid #424242;
}

.args-legend {
    margin: 29px 0 0 10px;
    font-size: 22px;
    font-weight: 600;
    line-height: 30px;
    letter-spacing: -0.2px;
}

.args-legend span {
    height: 37px;
}

.field {
    display: flex;
    align-items: center;
    padding-left: 18px;
    height: 46px;
    margin-top: 18px;
}

.args-legend + .field {
    margin-top: 20px;
}

.field label {
    width: 190px;
    padding-top: 5px;
    font-size: 20px;
    letter-spacing: -0.15px;
}

.field input {
    width: 316px;
    height: 47px;
    background-color: #111111;
    border: 1px solid #757575;
    border-radius: 2px;
    padding: 0 12px;
    font-family: "Liberation Sans", Arial, sans-serif;
    font-size: 23.4px;
    color: #ffffff;
}

.check {
    display: flex;
    align-items: center;
    margin: 25px 0 0 18px;
    height: 26px;
    font-size: 20px;
    letter-spacing: -0.15px;
}

.check input {
    width: 17px;
    height: 17px;
    margin-right: 7px;
    appearance: none;
    background-color: #fff;
    border: 1px solid #8f8f8f;
    border-radius: 3px;
}

.check + .field {
    margin-top: 20px;
}

/* status bar */
.statusbar {
    flex: 1;
    display: flex;
    align-items: center;
    background-color: #424242;
    padding: 2px 0 0 42px;
    font-size: 19px;
    color: #e0e0e0;
}

.toggle {
    width: 52px;
    height: 24px;
    margin-left: 7px;
    border-radius: 12px;
    background-color: #bdbdbd;
    display: flex;
    align-items: center;
    padding-left: 4px;
}

.toggle-dot {
    width: 16px;
    height: 16px;
    border-radius: 50%;
    background-color: #212121;
}

.status-zero {
    margin-left: 39px;
}

.term-ico {
    width: 23px;
    height: 23px;
    margin-left: 18px;
    background-color: #f5f5f5;
    color: #333;
    font-size: 15px;
    line-height: 25px;
    text-align: center;
}

.status-four {
    margin-left: 14px;
}

.cpu {
    margin-left: 16px;
}

.status-right {
    margin-left: auto;
}

.status-count {
    margin-left: 23px;
}

.status-bell {
    margin: 0 29px 0 14px;
    color: #e0e0e0;
}

/* edge side bar */
.edge-bar {
    width: 66px;
    flex-shrink: 0;
    display: flex;
    flex-direction: column;
    align-items: center;
    padding-top: 1px;
}

.edge-ico {
    height: 60.3px;
    display: flex;
    align-items: center;
    justify-content: center;
    flex-shrink: 0;
}

.edge-rule {
    width: 42px;
    height: 1px;
    background-color: #c8c8c8;
    flex-shrink: 0;
}

.edge-rule-top {
    margin-top: 18px;
}

.edge-plus {
    margin-top: 36px;
    height: 18px;
    flex-shrink: 0;
}

.edge-rule-bottom {
    margin-top: 199px;
}

.edge-panel {
    margin-top: 23px;
    height: 20px;
    flex-shrink: 0;
}

.edge-gear {
    margin-top: 37px;
    height: 28px;
    flex-shrink: 0;
}
```
